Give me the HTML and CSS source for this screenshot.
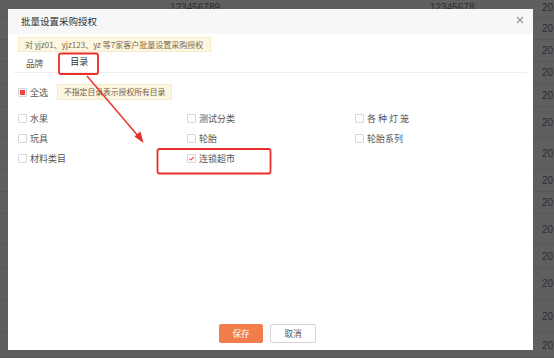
FILE: index.html
```html
<!DOCTYPE html>
<html lang="zh">
<head>
<meta charset="utf-8">
<link rel="stylesheet" href="styles.css">
</head>
<body>
<div class="backdrop">
  <div class="bg-row h18"><span class="bg-a">123456789</span><span class="bg-b">12345678</span><span class="bg-c">20</span></div>
  <div class="bg-row h22"><span class="bg-c">20</span></div>
  <div class="bg-row h22"><span class="bg-c">20</span></div>
  <div class="bg-row h22"><span class="bg-c">20</span></div>
  <div class="bg-row h23"><span class="bg-c">20</span></div>
  <div class="bg-row h31"><span class="bg-c">20</span></div>
  <div class="bg-row h32"><span class="bg-c">20</span></div>
  <div class="bg-row h22"><span class="bg-c">20</span></div>
  <div class="bg-row h22"><span class="bg-c">20</span></div>
  <div class="bg-row h31"><span class="bg-c">20</span></div>
  <div class="bg-row h23"><span class="bg-c">20</span></div>
  <div class="bg-row h32"><span class="bg-c">20</span></div>
  <div class="bg-row h33"><span class="bg-c">20</span></div>
  <div class="bg-row h25"><span class="bg-c">20</span></div>
</div>

<div class="modal">
  <div class="modal-header">
    <span class="modal-title">批量设置采购授权</span>
    <svg class="close" width="8" height="8" viewBox="0 0 8 8"><path d="M1 1L7 7M7 1L1 7" stroke="#9a9a9a" stroke-width="1.4"/></svg>
  </div>
  <div class="modal-body">
    <div class="notice">对 yjz01、yjz123、yz 等7家客户批量设置采购授权</div>
    <div class="tabs">
      <span class="tab">品牌</span>
      <span class="tab tab-active">目录</span>
    </div>
    <div class="all-row">
      <label class="check"><span class="box box-part"></span><span>全选</span></label>
      <span class="hint">不指定目录表示授权所有目录</span>
    </div>
    <div class="grid">
      <label class="check"><span class="box"></span><span>水果</span></label>
      <label class="check"><span class="box"></span><span>测试分类</span></label>
      <label class="check"><span class="box"></span><span>各 种 灯 笼</span></label>
      <label class="check"><span class="box"></span><span>玩具</span></label>
      <label class="check"><span class="box"></span><span>轮胎</span></label>
      <label class="check"><span class="box"></span><span>轮胎系列</span></label>
      <label class="check"><span class="box"></span><span>材料类目</span></label>
      <label class="check"><span class="box box-on"><svg width="9" height="9" viewBox="0 0 9 9"><path d="M1.8 4.6L3.8 6.5L7.4 2.4" fill="none" stroke="#e8413a" stroke-width="1.3"/></svg></span><span>连锁超市</span></label>
    </div>
    <div class="spacer"></div>
    <div class="footer">
      <button class="btn btn-primary">保存</button>
      <button class="btn btn-default">取消</button>
    </div>
  </div>
</div>

<svg class="annot" width="554" height="358" viewBox="0 0 554 358">
  <rect x="59" y="53.5" width="39" height="20.5" rx="2" fill="none" stroke="#ea2f2a" stroke-width="1.8"/>
  <rect x="157.5" y="149" width="113" height="24.5" rx="2" fill="none" stroke="#ea2f2a" stroke-width="1.8"/>
  <line x1="87" y1="76" x2="139" y2="137" stroke="#ea2f2a" stroke-width="1.4"/>
  <polygon points="143.5,143 134.5,136.5 140.5,131.5" fill="#ea2f2a"/>
</svg>
</body>
</html>
```

FILE: styles.css
```css
* { box-sizing: border-box; }
html, body { margin: 0; padding: 0; }
body {
  width: 554px;
  height: 358px;
  overflow: hidden;
  background: #5f5f5f;
  font-family: "Noto Sans CJK SC", "Noto Sans", sans-serif;
  position: relative;
}
.backdrop { display: flex; flex-direction: column; }
.bg-row {
  position: relative;
  border-bottom: 1px solid #575757;
  font-family: "Liberation Sans", Arial, sans-serif;
  font-size: 10px;
  color: #2e2e2e;
  display: flex;
  align-items: center;
}
.h18 { height: 18px; align-items: flex-start; padding-top: 2px; }
.h22 { height: 22px; }
.h23 { height: 23px; }
.h25 { height: 25px; }
.h31 { height: 31px; }
.h32 { height: 32px; }
.h33 { height: 33px; }
.bg-a { position: absolute; left: 170px; top: 2px; }
.bg-b { position: absolute; left: 430px; top: 2px; }
.bg-c { margin-left: 542px; }

.modal {
  position: absolute;
  left: 8px;
  top: 9px;
  width: 525px;
  height: 341px;
  background: #fff;
  display: flex;
  flex-direction: column;
}
.modal-header {
  height: 25px;
  background: #f7f7f7;
  display: flex;
  align-items: center;
  justify-content: space-between;
  padding: 0 9px 2px 13px;
}
.modal-title { font-size: 9.5px; color: #333; }
.close { display: block; margin-top: -2px; }

.modal-body {
  flex: 1;
  display: flex;
  flex-direction: column;
  padding: 3px 6px 7px;
}
.notice {
  align-self: flex-start;
  margin-left: 4px;
  height: 15px;
  width: 193px;
  padding: 0 0 0 6px;
  background: #fdf7e2;
  border: 1px solid #f6ebc4;
  font-size: 8px;
  line-height: 13px;
  color: #7b6a4c;
  white-space: nowrap;
}
.tabs {
  height: 21px;
  border-bottom: 1px solid #eeeeee;
  display: flex;
  align-items: center;
  padding-top: 1px;
}
.tab { font-size: 8.6px; color: #555; padding: 0 12px; }
.tab-active { color: #333; font-size: 9px; padding: 0 15px; margin-top: -2px; }

.all-row {
  margin-top: 11px;
  height: 16px;
  display: flex;
  align-items: center;
  padding-left: 4px;
}
.check {
  display: flex;
  align-items: center;
  gap: 3px;
  font-size: 9px;
  color: #555;
  white-space: pre;
}
.box {
  width: 9px;
  height: 9px;
  border: 1px solid #d6d6d6;
  border-radius: 1px;
  background: #fff;
  display: flex;
  align-items: center;
  justify-content: center;
  flex: none;
}
.box-part::after {
  content: "";
  width: 5px;
  height: 5px;
  background: #ef4444;
}
.box-on svg { display: block; }
.hint {
  margin-left: 9px;
  height: 16px;
  padding: 0 6px;
  background: #fdf7e2;
  border: 1px solid #f6ebc4;
  font-size: 7.8px;
  line-height: 14px;
  color: #6f6048;
}
.grid {
  margin-top: 8px;
  padding-left: 4px;
  display: grid;
  grid-template-columns: 169px 168px 1fr;
  grid-auto-rows: 20px;
  align-items: center;
}
.spacer { flex: 1; }
.footer {
  display: flex;
  justify-content: center;
  gap: 7px;
  padding-right: 6px;
}
.btn {
  height: 19px;
  padding: 0;
  border-radius: 2px;
  font-family: "Noto Sans CJK SC", sans-serif;
  font-size: 8.6px;
  line-height: 17px;
}
.btn-primary { width: 44px; background: #f07d4a; border: 1px solid #f07d4a; color: #fff; }
.btn-default { width: 46px; background: #fff; border: 1px solid #d4d4d4; color: #555; }

.annot { position: absolute; left: 0; top: 0; pointer-events: none; }
```
